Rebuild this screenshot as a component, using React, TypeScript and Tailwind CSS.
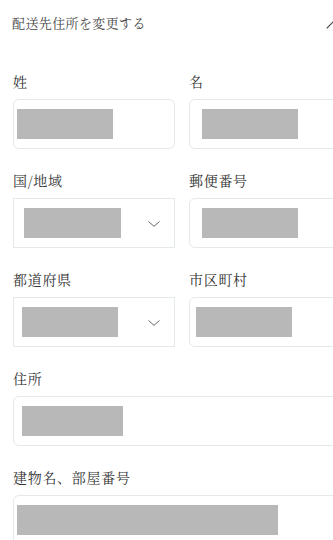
import React from "react";

const font = {
  fontFamily: '"Noto Serif CJK JP", "Noto Sans CJK JP", serif',
};

function Gray({ ml, w }: { ml: string; w: string }) {
  return <div className={`${ml} ${w} h-[30px] bg-[#b8b8b8]`} />;
}

function Label({ children }: { children: React.ReactNode }) {
  return (
    <div className="h-[20px] text-[14px] leading-[20px] tracking-[0.05em] text-[#333333] mb-2">
      {children}
    </div>
  );
}

function Chevron() {
  return (
    <svg width="12" height="6" viewBox="0 0 12 6" fill="none" className="mr-[14px] mt-[2px] shrink-0">
      <path d="M0.5 0.5 L6 5.3 L11.5 0.5" stroke="#666" strokeWidth="1" />
    </svg>
  );
}

export default function App() {
  return (
    <div className="w-[333px] h-[540px] overflow-hidden bg-white" style={font}>
      <div className="w-[364px] px-[13px]">
        <div className="h-[45px] flex items-center justify-between">
          <span className="text-[13px] leading-[20px] tracking-[0.03em] text-[#444444] -ml-px">
            配送先住所を変更する
          </span>
          <svg width="14" height="8" viewBox="0 0 14 8" fill="none" className="mr-[11px] mt-[5px]">
            <path d="M0.7 7.3 L7 1 L13.3 7.3" stroke="#444" strokeWidth="1.2" />
          </svg>
        </div>

        <div className="mt-[26px] flex flex-col gap-[21px]">
          <div className="grid grid-cols-2 gap-[14px]">
            <div>
              <Label>姓</Label>
              <div className="h-[50px] border border-[#e4e9ec] rounded-md flex items-center">
                <Gray ml="ml-[3px]" w="w-[96px]" />
              </div>
            </div>
            <div>
              <Label>名</Label>
              <div className="h-[50px] border border-[#e4e9ec] rounded-md flex items-center">
                <Gray ml="ml-[12px]" w="w-[96px]" />
              </div>
            </div>
          </div>

          <div className="grid grid-cols-2 gap-[14px]">
            <div>
              <Label>国/地域</Label>
              <div className="h-[50px] border border-[#e4e9ec] flex items-center justify-between">
                <Gray ml="ml-[10px]" w="w-[97px]" />
                <Chevron />
              </div>
            </div>
            <div>
              <Label>郵便番号</Label>
              <div className="h-[50px] border border-[#e4e9ec] rounded-md flex items-center">
                <Gray ml="ml-[12px]" w="w-[96px]" />
              </div>
            </div>
          </div>

          <div className="grid grid-cols-2 gap-[14px]">
            <div>
              <Label>都道府県</Label>
              <div className="h-[50px] border border-[#e4e9ec] flex items-center justify-between">
                <Gray ml="ml-[8px]" w="w-[96px]" />
                <Chevron />
              </div>
            </div>
            <div>
              <Label>市区町村</Label>
              <div className="h-[50px] border border-[#e4e9ec] rounded-md flex items-center">
                <Gray ml="ml-[6px]" w="w-[96px]" />
              </div>
            </div>
          </div>

          <div>
            <Label>住所</Label>
            <div className="h-[50px] border border-[#e4e9ec] rounded-md flex items-center">
              <Gray ml="ml-[8px]" w="w-[101px]" />
            </div>
          </div>

          <div>
            <Label>建物名、部屋番号</Label>
            <div className="h-[50px] border border-[#e4e9ec] rounded-md flex items-center">
              <Gray ml="ml-[3px]" w="w-[261px]" />
            </div>
          </div>
        </div>
      </div>
    </div>
  );
}
